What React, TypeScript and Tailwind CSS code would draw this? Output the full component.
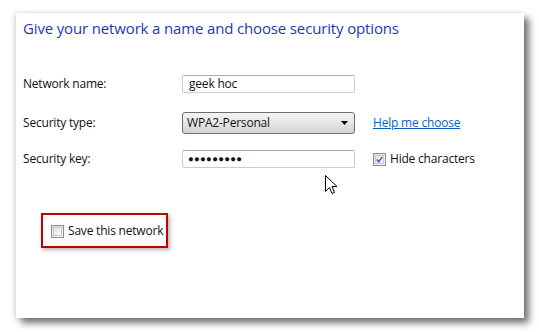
import React from "react";

const font = { fontFamily: '"Open Sans", "Noto Sans", Arial, sans-serif' };

function Checkbox({ checked }: { checked?: boolean }) {
  return (
    <div className="w-[13px] h-[13px] border border-[#8f8f8f] bg-gradient-to-br from-[#dcdcdc] to-[#f7f7f7] p-[1px] flex items-center justify-center shrink-0">
      <div className="w-full h-full border border-[#c9c9c9] bg-gradient-to-br from-[#e3e3e3] to-[#fbfbfb] flex items-center justify-center">
        {checked && (
          <svg width="9" height="9" viewBox="0 0 9 9">
            <path d="M1 4.5 L3.5 7.5 L8 1" stroke="#3a56c8" strokeWidth="1.8" fill="none" />
          </svg>
        )}
      </div>
    </div>
  );
}

export default function App() {
  return (
    <div className="w-[539px] h-[332px] bg-white relative overflow-hidden" style={font}>
      <div className="ml-[16px] mt-[13px] w-[508px] h-[305px] bg-white shadow-[5px_5px_7px_rgba(0,0,0,0.55),-2px_0_5px_rgba(0,0,0,0.12)] pl-[7px] pt-[5px] text-[12px] tracking-[-0.2px] text-[#111]">
        <div className="text-[15px] leading-[20px] text-[#1c3ab0] tracking-[-0.15px] whitespace-nowrap">
          Give your network a name and choose security options
        </div>
        <div className="mt-[37px] grid grid-cols-[159px_173px_1fr] items-center">
          <div className="leading-[18px]">Network name:</div>
          <div className="h-[18px] border border-[#c8ccd3] border-t-[#abadb3] rounded-[2px] flex items-center pl-[6px]">geek hoc</div>
          <div />
        </div>
        <div className="mt-[19px] grid grid-cols-[159px_173px_18px_1fr] items-center">
          <div className="leading-[18px]">Security type:</div>
          <div className="h-[22px] border border-[#707070] rounded-[3px] bg-gradient-to-b from-[#f3f3f3] via-[#e6e6e6] to-[#d2d2d2] flex items-center justify-between pl-[4px] pr-[6px]">
            <span>WPA2-Personal</span>
            <svg width="7" height="4" viewBox="0 0 7 4"><path d="M0 0 H7 L3.5 4 Z" fill="#000" /></svg>
          </div>
          <div />
          <div className="text-[#0a5fc7] underline leading-[18px] whitespace-nowrap">Help me choose</div>
        </div>
        <div className="mt-[16px] grid grid-cols-[159px_173px_18px_1fr] items-center">
          <div className="leading-[18px]">Security key:</div>
          <div className="h-[18px] border border-[#c8ccd3] border-t-[#abadb3] rounded-[2px] flex items-center pl-[5px] text-[9.5px] tracking-[0.3px] leading-none">●●●●●●●●●</div>
          <div />
          <div className="flex items-center gap-[4px] whitespace-nowrap">
            <Checkbox checked />
            <span className="leading-[18px]">Hide characters</span>
          </div>
        </div>
        <div className="mt-[45px] ml-[18px] w-[127px] h-[35px] border-2 border-[#c00000] shadow-[2px_2px_4px_rgba(0,0,0,0.3)] flex items-center pl-[8px] gap-[4px] pt-[1px] whitespace-nowrap">
          <Checkbox />
          <span className="leading-[18px]">Save this network</span>
        </div>
      </div>
      <svg className="absolute left-[325px] top-[175px]" width="13" height="20" viewBox="0 0 13 20">
        <path d="M0.5 0.5 V16.5 L4.5 12.5 L7 18.5 L9.5 17.5 L7 11.5 H12 Z" fill="#fff" stroke="#000" strokeWidth="1" strokeLinejoin="miter" />
      </svg>
    </div>
  );
}
